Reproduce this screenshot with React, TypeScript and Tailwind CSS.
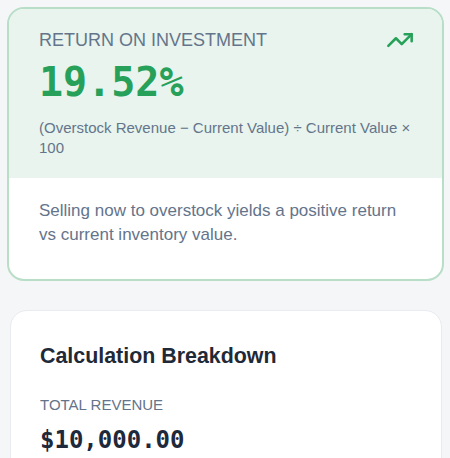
import { TrendingUp } from "lucide-react";

const SANS = "font-['Liberation_Sans',Arial,sans-serif]";
const MONO = "font-['DejaVu_Sans_Mono',monospace]";

export default function App() {
  return (
    <div className={`min-h-screen bg-[#f5f6f8] pt-[7px] pb-10 ${SANS}`}>
      <RoiCard />
      <BreakdownCard />
    </div>
  );
}

function RoiCard() {
  return (
    <div className="ml-[7px] w-[437px] h-[274px] overflow-hidden rounded-[17px] border-2 border-[#b8dec8] bg-white">
      <div className="bg-[#e8f4ed] pl-[30px] pr-[28px] pt-[17px] pb-[20px]">
        <div className="flex items-start justify-between">
          <p className="text-[18px] leading-[28px] text-[#64748b]">RETURN ON INVESTMENT</p>
          <TrendingUp size={28} strokeWidth={2.2} className="text-[#27a05a]" />
        </div>
        <p className={`mt-[8px] text-[40px] font-bold leading-[40px] text-[#27a05a] ${MONO}`}>19.52%</p>
        <p className="mt-[16px] text-[15px] leading-[20px] text-[#64748b]">
          (Overstock Revenue − Current Value) ÷ Current Value × 100
        </p>
      </div>
      <div className="pl-[30px] pr-[28px] pt-[21px]">
        <p className="text-[17px] leading-[24px] text-[#64748b]">
          Selling now to overstock yields a positive return vs current inventory value.
        </p>
      </div>
    </div>
  );
}

function BreakdownCard() {
  return (
    <div className="ml-[10px] mt-[29px] w-[432px] rounded-[17px] border border-[#e8ebef] bg-white pl-[29px] pr-8 pt-[31px] pb-8">
      <h2 className="text-[21.4px] font-bold leading-[28px] text-[#1f2937]">Calculation Breakdown</h2>
      <p className="mt-[25px] text-[15px] leading-[20px] text-[#64748b]">TOTAL REVENUE</p>
      <p className={`mt-[9px] text-[24px] font-bold leading-[32px] text-[#1e293b] ${MONO}`}>$10,000.00</p>
    </div>
  );
}
